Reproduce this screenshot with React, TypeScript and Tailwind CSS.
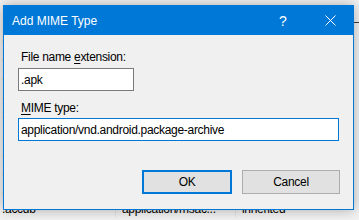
import React from 'react';

const font = { fontFamily: '"Liberation Sans", Arial, sans-serif' };

// rows of the list window that sits behind the dialog
const rows = [
  ['.aab', 'application/x-authorware-bin', 'inherited'],
  ['.aam', 'application/x-authorware-map', 'inherited'],
  ['.aas', 'application/x-authorware-seg', 'inherited'],
  ['.ac3', 'audio/ac3', 'inherited'],
  ['.acx', 'application/internet-property-stream', 'inherited'],
  ['.accda', 'application/msaccess.addin', 'inherited'],
  ['.accdc', 'application/msaccess.cab', 'inherited'],
  ['.accde', 'application/msaccess.exec', 'inherited'],
  ['.accdr', 'application/msaccess.runtime', 'inherited'],
  ['.accdb', 'application/msac...', 'inherited'],
];

const App: React.FC = () => {
  return (
    <div className="relative w-[359px] h-[220px] overflow-hidden bg-[#f2f2f2] text-[12px] text-black" style={font}>
      {/* Background list */}
      <div className="flex flex-col">
        <div className="h-[23px] flex">
          <div className="flex-1" />
          <div className="w-[120px] border-b border-[#3c3c3c]" />
        </div>
        <div className="h-[5px]" />
        {rows.map((r, i) => (
          <div key={i} className="h-[19px] flex items-center leading-[16px] whitespace-nowrap tracking-[-0.3px]">
            <div className="w-[115px] pl-[2px] overflow-hidden">{r[0]}</div>
            <div className="w-[120px] pl-[6px] border-l border-[#e3e3e3] overflow-hidden">{r[1]}</div>
            <div className="flex-1 pl-[6px] border-l border-[#e3e3e3]">{r[2]}</div>
          </div>
        ))}
      </div>

      {/* Dialog */}
      <div className="absolute left-[3px] top-[5px] w-[351px] h-[205px] border border-[#0078d7] bg-[#f0f0f0] shadow-[0_0_12px_rgba(0,0,0,0.3)] flex flex-col">
        <div className="h-[29px] bg-[#0078d7] flex items-center text-white">
          <span className="pl-[8px] pt-[1px] flex-1 leading-[16px]">Add MIME Type</span>
          <span className="w-[46px] text-center text-[14px] leading-[16px] pr-[2px]">?</span>
          <div className="w-[46px] h-[29px] flex items-center justify-center">
            <svg width="11" height="11" viewBox="0 0 11 11">
              <path d="M0.5 0.5 L10.5 10.5 M10.5 0.5 L0.5 10.5" stroke="white" strokeWidth="1" fill="none" />
            </svg>
          </div>
        </div>

        <div className="flex-1 flex flex-col pt-[14px] pb-[15px] pl-[14px] pr-[13px] tracking-[-0.3px]">
          <div className="pl-[3px] leading-[16px]">
            File name <span className="underline underline-offset-2">e</span>xtension:
          </div>
          <div className="mt-[3px] w-[116px] h-[23px] border border-[#7a7a7a] bg-white flex items-center pl-[2px] leading-[16px]">
            .apk
          </div>
          <div className="mt-[9px] pl-[3px] leading-[16px]">
            <span className="underline underline-offset-2">M</span>IME type:
          </div>
          <div className="mt-[2px] w-[321px] h-[23px] border border-[#0078d7] bg-white flex items-center pl-[2px] leading-[16px] whitespace-nowrap">
            application/vnd.android.package-archive
          </div>
          <div className="mt-[29px] flex justify-end gap-[10px]">
            <button className="w-[90px] h-[24px] border-2 border-[#0078d7] bg-[#e1e1e1] leading-[16px]">OK</button>
            <button className="w-[98px] h-[24px] border border-[#adadad] bg-[#e1e1e1] leading-[16px]">Cancel</button>
          </div>
        </div>
      </div>
    </div>
  );
};

export default App;
